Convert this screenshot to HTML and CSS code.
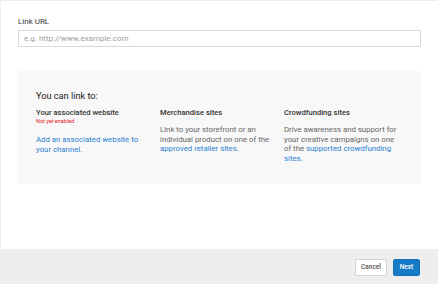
FILE: index.html
```html
<!DOCTYPE html>
<html lang="en">
<head>
    <meta charset="UTF-8">
    <title>Add link</title>
    <link rel="stylesheet" href="styles.css">
</head>
<body>
    <div class="dialog">
        <div class="content">
            <label class="field-label" for="url">Link URL</label>
            <input class="field-input" id="url" type="text" placeholder="e.g. http://www.example.com">

            <div class="info">
                <h2 class="info-title">You can link to:</h2>
                <div class="cols">
                    <div class="col">
                        <h3>Your associated website</h3>
                        <div class="warn">Not yet enabled</div>
                        <p class="gap"><a href="#">Add an associated website to your channel.</a></p>
                    </div>
                    <div class="col">
                        <h3>Merchandise sites</h3>
                        <p>Link to your storefront or an individual product on one of the <a href="#">approved retailer sites</a>.</p>
                    </div>
                    <div class="col">
                        <h3>Crowdfunding sites</h3>
                        <p>Drive awareness and support for your creative campaigns on one of the <a href="#">supported crowdfunding sites</a>.</p>
                    </div>
                </div>
            </div>
        </div>
        <div class="footer">
            <button class="btn">Cancel</button>
            <button class="btn primary">Next</button>
        </div>
    </div>
</body>
</html>
```

FILE: styles.css
```css
*{
    margin: 0;
    padding: 0;
    box-sizing: border-box;
    font-family: Roboto, 'Liberation Sans', sans-serif;
}
body{
    background: #fff;
}
.dialog{
    width: 438px;
    height: 284px;
    display: flex;
    flex-direction: column;
}
.content{
    flex: 1;
    border-top: 1px solid #ececec;
    border-left: 1px solid #f0f0f0;
    padding: 16px 17px 0 17px;
}
.field-label{
    display: block;
    font-size: 8px;
    line-height: 10px;
    color: #333;
    margin-bottom: 3px;
}
.field-input{
    display: block;
    width: 100%;
    height: 17px;
    border: 1px solid #d9d9d9;
    padding: 0 5px;
    font-size: 8px;
    color: #333;
    outline: none;
}
.field-input::placeholder{
    color: #a0a0a0;
}
.info{
    margin-top: 24px;
    height: 113px;
    background: #f8f8f8;
    padding: 19px 18px 0 18px;
}
.info-title{
    font-size: 9.2px;
    line-height: 11px;
    font-weight: 400;
    color: #222;
    margin-bottom: 7px;
}
.cols{
    display: flex;
    gap: 10px;
}
.col{
    width: 114px;
    font-size: 7.8px;
    line-height: 9.5px;
    color: #666;
}
.col h3{
    font-size: 7.6px;
    line-height: 10px;
    font-weight: 500;
    color: #333;
    margin-bottom: 7px;
}
.col .warn{
    font-size: 5.5px;
    line-height: 6px;
    color: #e62117;
    margin-top: -7px;
}
.col p.gap{
    margin-top: 11px;
}
.col a{
    color: #2a7fd0;
    text-decoration: none;
}
.footer{
    height: 35px;
    background: #eeeeee;
    display: flex;
    align-items: center;
    justify-content: flex-end;
    gap: 6px;
    padding: 1px 18px 0 0;
}
.btn{
    height: 17px;
    width: 32px;
    padding: 0;
    font-size: 6.5px;
    font-weight: 500;
    color: #555;
    background: #fff;
    border: 1px solid #d3d3d3;
    border-radius: 2px;
}
.btn.primary{
    width: 27px;
    background: #167ac6;
    border-color: #1570b6;
    color: #fff;
}
```
